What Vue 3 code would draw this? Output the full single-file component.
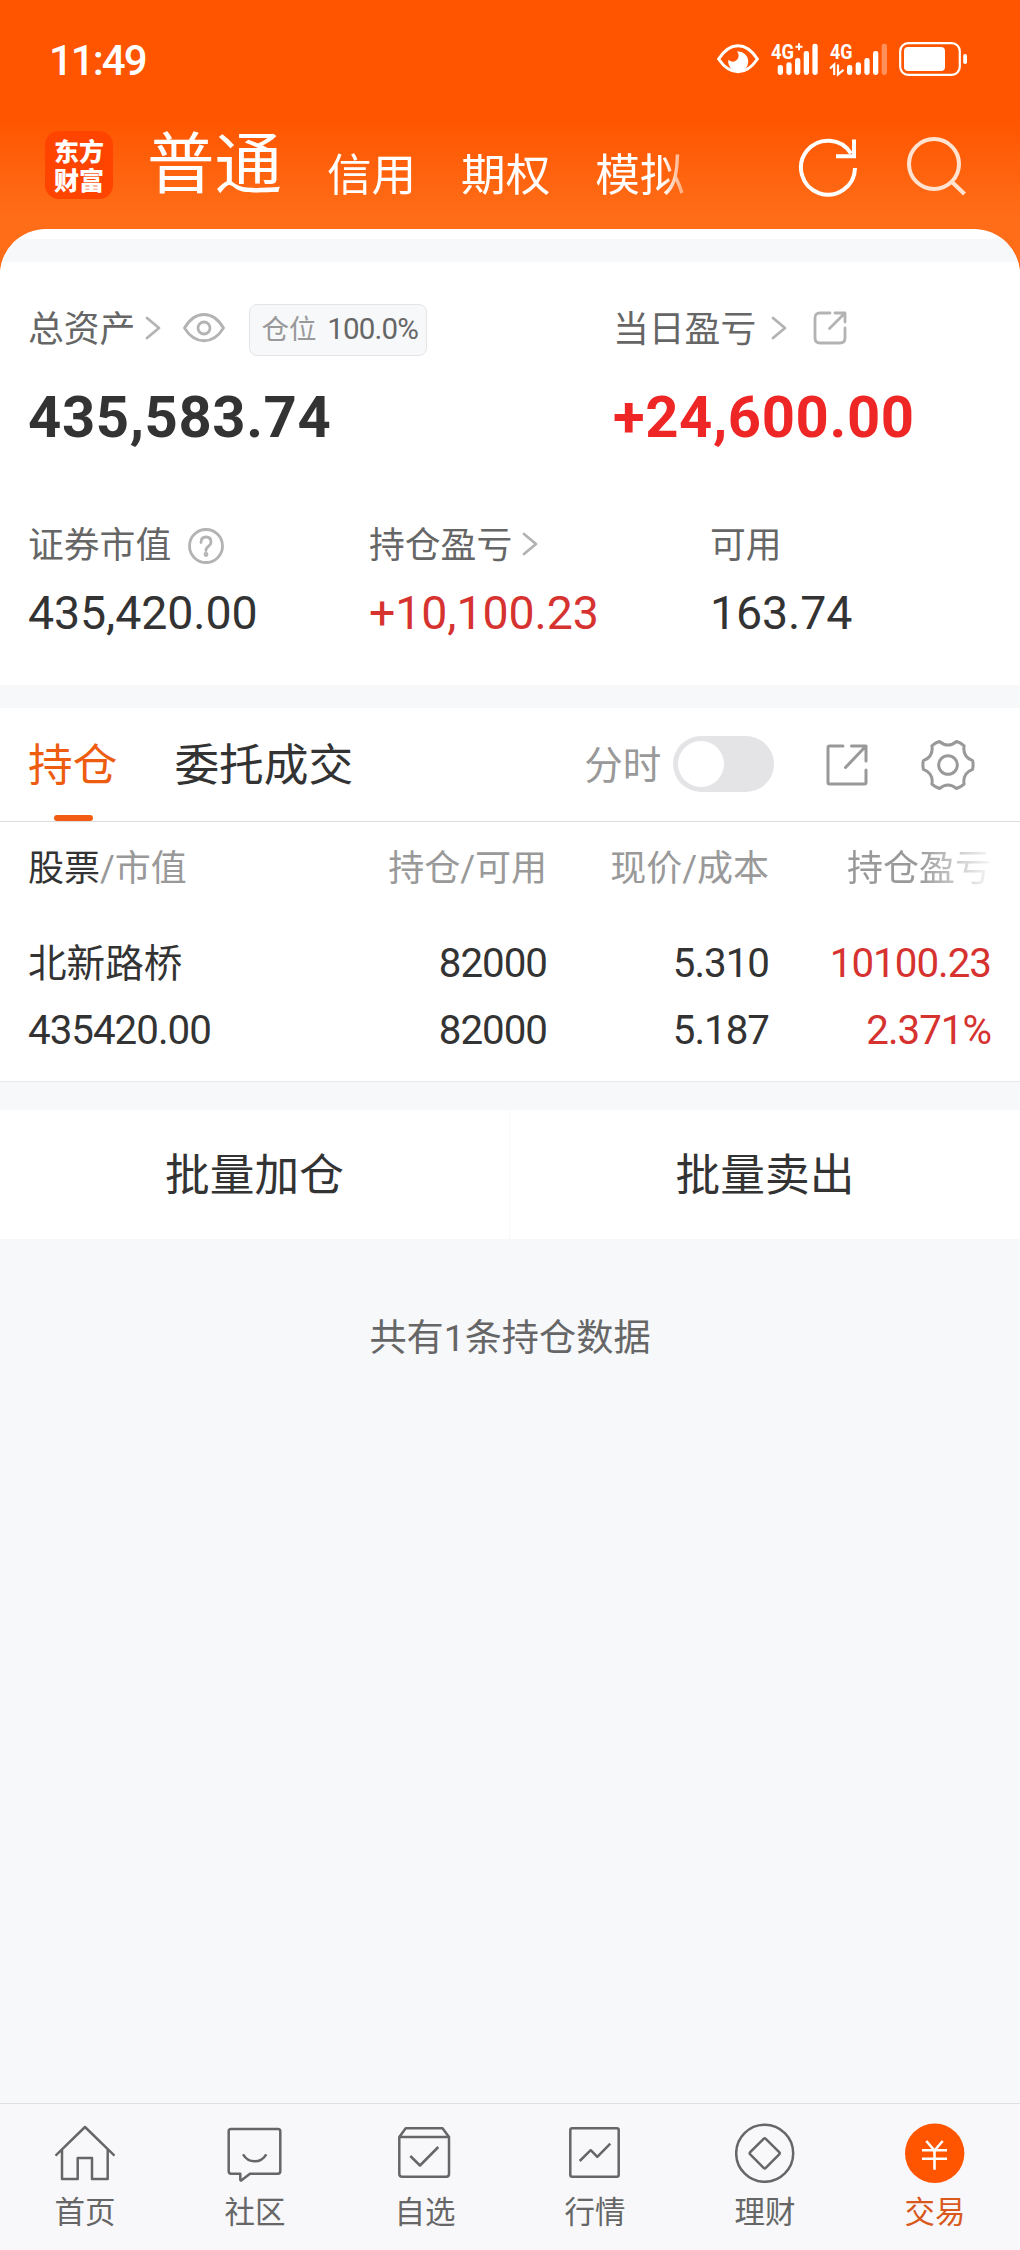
<template>
  <div class="page">
    <header class="header">
      <div class="status">
        <span class="clock">11:49</span>
        <svg class="status-icons" viewBox="0 0 250 34">
          <path class="line" d="M1.600 17C13-.6 29-.6 40.400 17C29 34 13 34 1.600 17Z" stroke-width="3" />
          <path d="M20 9.600a10 10 0 1 1-8.600 8.200a5.400 5.400 0 1 0 8.600-8.200Z" />
          <text x="54" y="17" textLength="23" lengthAdjust="spacingAndGlyphs">4G</text>
          <path class="line" d="M78.500 4.700h7M82 1.200v7" stroke-width="2" />
          <rect v-for="(top, i) in bars" :key="'a' + i" :x="60.7 + i * 8.67" :y="top" width="5.3" :height="33 - top" rx="2.4" />
          <text x="113" y="17" textLength="22.5" lengthAdjust="spacingAndGlyphs">4G</text>
          <path class="line" d="M113 26.500l4.200-4v10.500M121 22.500v10l5.500-4.600" stroke-width="2.2" />
          <rect
            v-for="(top, i) in bars" :key="'b' + i" :x="130 + i * 8.67" :y="top" width="5.3" :height="33 - top" rx="2.4"
            :opacity="i === 4 ? 0.35 : 1"
          />
          <rect class="line" x="183.2" y="1.2" width="59.6" height="31.6" rx="8" stroke-width="2.2" />
          <rect x="187" y="5" width="41" height="24" rx="4" />
          <rect x="246.2" y="12" width="3.8" height="10" rx="1.8" />
        </svg>
      </div>
      <div class="nav">
        <div class="logo"><span>东方</span><span>财富</span></div>
        <nav class="accounts">
          <a
            v-for="name in accounts" :key="name" class="account"
            :class="{ current: name === account }" @click="account = name"
          >{{ name }}</a>
        </nav>
        <svg class="refresh" viewBox="0 0 60 60">
          <path d="M57 31A27 27 0 1 1 53 16.500" />
          <path d="M56 2.500v18.800M38 19.300h20" />
        </svg>
        <svg class="search" viewBox="0 0 60 60">
          <circle cx="27" cy="27" r="25" />
          <path d="M44.500 44.500L57.500 57" />
        </svg>
      </div>
    </header>

    <main class="sheet">
      <div class="strip"></div>
      <section class="summary">
        <div class="totals">
          <div class="total">
            <div class="label">
              <span class="text">总资产</span>
              <svg class="chevron" viewBox="0 0 16 24"><path d="M2 2l12 10L2 22" /></svg>
              <svg class="eye" viewBox="0 0 42 30">
                <path d="M1.500 15C12-3 30-3 40.500 15C30 32 12 32 1.500 15Z" />
                <circle cx="21" cy="15" r="6" />
              </svg>
              <span class="ratio">仓位 <b>100.0%</b></span>
            </div>
            <div class="amount">435,583.74</div>
          </div>
          <div class="total">
            <div class="label">
              <span class="text">当日盈亏</span>
              <svg class="chevron far" viewBox="0 0 16 24"><path d="M2 2l12 10L2 22" /></svg>
              <svg class="share" viewBox="0 0 34 34">
                <path d="M17 2H7Q2 2 2 7v20q0 5 5 5h20q5 0 5-5V17M22 2h10v9M32 2L16.500 17.500" />
              </svg>
            </div>
            <div class="amount up">+24,600.00</div>
          </div>
        </div>
        <div class="details">
          <div class="detail">
            <div class="label">
              <span class="text">证券市值</span>
              <svg class="help" viewBox="0 0 36 36">
                <circle cx="18" cy="18" r="16.500" />
                <path d="M13 14.500q0-5.500 5-5.500t5 5q0 2.500-2.600 4.400T18 22.500" />
                <circle cx="18" cy="26.500" r="1" />
              </svg>
            </div>
            <div class="value">435,420.00</div>
          </div>
          <div class="detail">
            <div class="label">
              <span class="text">持仓盈亏</span>
              <svg class="chevron" viewBox="0 0 16 24"><path d="M2 2l12 10L2 22" /></svg>
            </div>
            <div class="value up">+10,100.23</div>
          </div>
          <div class="detail">
            <div class="label"><span class="text">可用</span></div>
            <div class="value">163.74</div>
          </div>
        </div>
      </section>
      <div class="strip"></div>

      <section class="holdings">
        <div class="tabs">
          <a class="tab" :class="{ active: tab === 0 }" @click="tab = 0">持仓</a>
          <a class="tab" :class="{ active: tab === 1 }" @click="tab = 1">委托成交</a>
          <span class="switch-label">分时</span>
          <button class="switch" :class="{ on: minuteChart }" @click="minuteChart = !minuteChart"></button>
          <svg class="export" viewBox="0 0 44 44">
            <path d="M18 3H4.500Q3 3 3 4.500v35Q3 41 4.500 41h35q1.500 0 1.500-1.500V27M26.500 3H41v15M41 3L20.500 24.500" />
          </svg>
          <svg class="gear" viewBox="-27 -27 54 54">
            <path
              d="M24.600-4.300Q25.600 0 24.600 4.300Q14.300 8.250 16.100 19.200Q12.800 22.200 8.550 23.500Q0 16.500-8.550 23.500Q-12.800 22.200-16.100 19.200Q-14.300 8.250-24.600 4.300Q-25.600 0-24.600-4.300Q-14.300-8.250-16.100-19.200Q-12.800-22.200-8.550-23.500Q0-16.500 8.550-23.500Q12.800-22.200 16.100-19.200Q14.300-8.250 24.600-4.300Z"
            />
            <circle r="9.300" />
          </svg>
        </div>
        <div class="row head">
          <div><em>股票</em>/市值</div>
          <div>持仓/可用</div>
          <div>现价/成本</div>
          <div class="fade">持仓盈亏</div>
        </div>
        <div v-for="stock in stocks" :key="stock.name" class="row">
          <div><p class="name">{{ stock.name }}</p><p>{{ stock.marketValue }}</p></div>
          <div><p>{{ stock.amount }}</p><p>{{ stock.available }}</p></div>
          <div><p>{{ stock.price }}</p><p>{{ stock.cost }}</p></div>
          <div class="up"><p>{{ stock.profit }}</p><p>{{ stock.rate }}</p></div>
        </div>
      </section>

      <div class="batch">
        <button>批量加仓</button>
        <button>批量卖出</button>
      </div>
      <p class="count">共有{{ stocks.length }}条持仓数据</p>
    </main>

    <footer class="tabbar">
      <a class="item">
        <svg viewBox="0 0 60 60"><path d="M.5 32.700L30 4l29.500 28.700M7 26.500V56h15.700V35H37v21h15.700V26.500" /></svg>
        首页
      </a>
      <a class="item">
        <svg viewBox="0 0 60 60">
          <path d="M6 6h47q2.300 0 2.300 2.300v40q0 2.400-2.300 2.400H25l-8.500 6.600q-1.200.7-1.200-.7v-5.900H6q-2.300 0-2.300-2.400v-40Q3.700 6 6 6ZM18 31.300q4.300 7 11.700 7t11.600-7" />
        </svg>
        社区
      </a>
      <a class="item">
        <svg viewBox="0 0 60 60">
          <path d="M4.300 14l6.400-8.700H47.500L54 14v37q0 2.700-2.700 2.700H7q-2.700 0-2.700-2.700ZM4.300 14H54M15.300 33l9.700 9.500L43.300 24" />
        </svg>
        自选
      </a>
      <a class="item">
        <svg viewBox="0 0 60 60">
          <rect x="5.300" y="5.300" width="48.400" height="48.400" rx="2" />
          <path d="M14.700 38l11-10.800 6.600 6.600 13-13.100" />
        </svg>
        行情
      </a>
      <a class="item">
        <svg viewBox="0 0 60 60">
          <circle cx="29.700" cy="30.300" r="28.500" />
          <rect x="18.700" y="19.300" width="22" height="22" rx="1.500" transform="rotate(45 29.700 30.300)" />
        </svg>
        理财
      </a>
      <a class="item active">
        <svg viewBox="0 0 60 60">
          <circle class="disc" cx="29.700" cy="30.300" r="29.700" />
          <path class="yuan" d="M21.300 18l8.200 9.500 8.200-9.500M29.500 27v19.700M17 27.200h25M17 35.700h25" />
        </svg>
        交易
      </a>
    </footer>
  </div>
</template>

<script setup>
import { ref } from 'vue';

const accounts = ['普通', '信用', '期权', '模拟'];
const account = ref('普通');
const tab = ref(0);
const minuteChart = ref(false);

// top edge of each signal bar, shortest first
const bars = [23, 20.3, 16, 9, 1.7];

const stocks = ref([
  {
    name: '北新路桥',
    marketValue: '435420.00',
    amount: '82000',
    available: '82000',
    price: '5.310',
    cost: '5.187',
    profit: '10100.23',
    rate: '2.371%'
  }
]);
</script>

<style>
body {
  margin: 0;
  background: #f7f8fa;
}
</style>

<style scoped>
.page {
  width: 1020px;
  height: 2250px;
  display: flex;
  flex-direction: column;
  font-family: Roboto, "Noto Sans CJK SC", sans-serif;
  color: #333;
  background: linear-gradient(#ff5500 118px, #ff6d18 215px, #ff6d18 290px, #f7f8fa 290px);
}

p {
  margin: 0;
}

svg {
  display: block;
  flex: none;
  fill: none;
}

button {
  border: none;
  padding: 0;
  font-family: inherit;
  color: inherit;
}

.header {
  height: 229px;
}

.status {
  display: flex;
  justify-content: space-between;
  padding: 42px 53px 0 49px;
  height: 34px;
}

.clock {
  font-size: 42px;
  font-weight: 500;
  line-height: 37px;
  letter-spacing: -2px;
  color: #fff;
}

.status-icons {
  width: 250px;
  height: 34px;
  overflow: visible;
  fill: #fff;
  font-size: 21px;
  font-weight: 700;
}

.status-icons .line {
  fill: none;
  stroke: #fff;
}

.nav {
  display: flex;
  align-items: flex-start;
  padding: 55px 53px 0 45px;
}

.logo {
  width: 68px;
  height: 61px;
  padding-top: 7px;
  border-radius: 14px;
  background: #ff4400;
  color: #fff;
  font-size: 25px;
  font-weight: 900;
  line-height: 29px;
  display: flex;
  flex-direction: column;
  align-items: center;
}

.accounts {
  display: flex;
  align-items: flex-start;
  gap: 45px;
  width: 570px;
  margin-left: 34px;
  height: 92px;
  margin-top: -7px;
  color: #fff;
  -webkit-mask: linear-gradient(90deg, #000 516px, transparent 552px);
  mask: linear-gradient(90deg, #000 516px, transparent 552px);
}

.account {
  margin-top: 12px;
  font-size: 44.6px;
  line-height: 80px;
}

.account.current {
  margin-top: 1px;
  font-size: 67.5px;
}

.refresh,
.search {
  width: 60px;
  height: 60px;
  margin: 6px 0 0 82px;
  stroke: #fff;
  stroke-width: 4;
}

.search {
  margin-left: 49px;
  stroke: #ffe3d0;
}

.sheet {
  flex: 1;
  padding-top: 10px;
  border-radius: 46px 46px 0 0;
  overflow: hidden;
  background: linear-gradient(#fff 10px, #f7f8fa 10px);
}

.strip {
  height: 23px;
  background: #f7f8fa;
}

.summary {
  height: 423px;
  background: #fff;
}

.totals {
  display: grid;
  grid-template-columns: 585px 1fr;
  padding: 40px 0 0 28px;
}

.label {
  display: flex;
  align-items: center;
  height: 52px;
  font-size: 35.8px;
  white-space: nowrap;
  color: #666;
}

.label .text {
  padding-bottom: 4px;
}

.label svg {
  stroke: #b3b3b3;
  stroke-width: 2.8;
  stroke-linecap: round;
  stroke-linejoin: round;
}

.chevron {
  width: 16px;
  height: 24px;
  margin-left: 10px;
}

.chevron.far {
  margin-left: 15px;
}

.eye {
  width: 42px;
  height: 30px;
  margin-left: 22px;
}

.share {
  width: 34px;
  height: 34px;
  margin-left: 26px;
}

.help {
  width: 36px;
  height: 36px;
  margin: 3px 0 0 17px;
}

.ratio {
  box-sizing: border-box;
  width: 178px;
  height: 52px;
  margin: 3px 0 0 24px;
  padding-left: 11px;
  border: 1px solid #e4e4e6;
  border-radius: 8px;
  background: #f7f8fa;
  font-size: 27.5px;
  line-height: 49px;
  color: #999;
}

.ratio b {
  margin-left: 4px;
  font-size: 29.5px;
  font-weight: 400;
  letter-spacing: -0.8px;
  color: #666;
}

.amount {
  margin-top: 32px;
  font-size: 58px;
  font-weight: 700;
  line-height: 62px;
  letter-spacing: 0.6px;
}

.amount.up {
  color: #ee2626;
}

.up {
  color: #d63230;
}

.details {
  display: grid;
  grid-template-columns: repeat(3, 341px);
  padding: 70px 0 0 28px;
}

.value {
  margin-top: 15px;
  font-size: 46.5px;
  line-height: 56px;
  letter-spacing: -0.1px;
}

.holdings {
  height: 373px;
  border-bottom: 1px solid #e8e9ec;
  background: #fff;
}

.tabs {
  display: flex;
  align-items: center;
  height: 113px;
  padding-left: 28px;
  border-bottom: 1px solid #dedede;
}

.tab {
  position: relative;
  margin-right: 57px;
  padding-top: 4px;
  font-size: 44.7px;
  line-height: 109px;
}

.tab.active {
  color: #ee5c10;
}

.tab.active::after {
  content: "";
  position: absolute;
  left: 26px;
  bottom: 0;
  width: 39px;
  height: 6px;
  border-radius: 3px;
  background: #f25c12;
}

.switch-label {
  margin-left: 174px;
  padding-bottom: 5px;
  font-size: 38.5px;
  color: #999;
}

.switch {
  width: 101px;
  height: 56px;
  margin: 0 0 1px 12px;
  padding: 5px;
  border-radius: 28px;
  background: #e4e4e6;
}

.switch::before {
  content: "";
  display: block;
  width: 46px;
  height: 46px;
  border-radius: 50%;
  background: #fff;
}

.switch.on::before {
  margin-left: auto;
}

.export,
.gear {
  stroke: #999;
  stroke-width: 3;
  stroke-linejoin: round;
  stroke-linecap: round;
}

.export {
  width: 44px;
  height: 44px;
  margin-left: 51px;
}

.gear {
  width: 54px;
  height: 54px;
  margin-left: 52px;
}

.row {
  display: grid;
  grid-template-columns: 260px 259px 222px 222px;
  padding: 1px 0 0 28px;
  font-size: 40.3px;
  line-height: 67px;
  letter-spacing: -1px;
  text-align: right;
}

.row > div:first-child {
  text-align: left;
}

.row.head {
  height: 106px;
  font-size: 36px;
  line-height: 92px;
  letter-spacing: 0;
  color: #999;
}

.row em {
  font-style: normal;
  color: #333;
}

.row .name {
  font-size: 38.6px;
  letter-spacing: 0;
}

.fade {
  -webkit-mask: linear-gradient(90deg, #000 150px, transparent 228px);
  mask: linear-gradient(90deg, #000 150px, transparent 228px);
}

.batch {
  display: grid;
  grid-template-columns: 509px 510px;
  gap: 1px;
  margin-top: 28px;
}

.batch button {
  height: 129px;
  padding-bottom: 6px;
  background: #fff;
  font-size: 44.7px;
}

.count {
  margin-top: 72px;
  font-size: 37.2px;
  line-height: 54px;
  text-align: center;
  color: #666;
}

.tabbar {
  display: grid;
  grid-template-columns: repeat(6, 170px);
  height: 146px;
  border-top: 1px solid #e0e0e0;
  background: #f8f8fa;
}

.item {
  display: flex;
  flex-direction: column;
  align-items: center;
  padding-top: 19px;
  font-size: 30.5px;
  line-height: 59px;
  color: #666;
}

.item svg {
  width: 60px;
  height: 60px;
  stroke: #666;
  stroke-width: 2.5;
  stroke-linejoin: round;
}

.item.active {
  color: #d9591c;
}

.item .disc {
  fill: #ff5500;
  stroke: none;
}

.item .yuan {
  stroke: #fff;
  stroke-width: 2.6;
}
</style>
